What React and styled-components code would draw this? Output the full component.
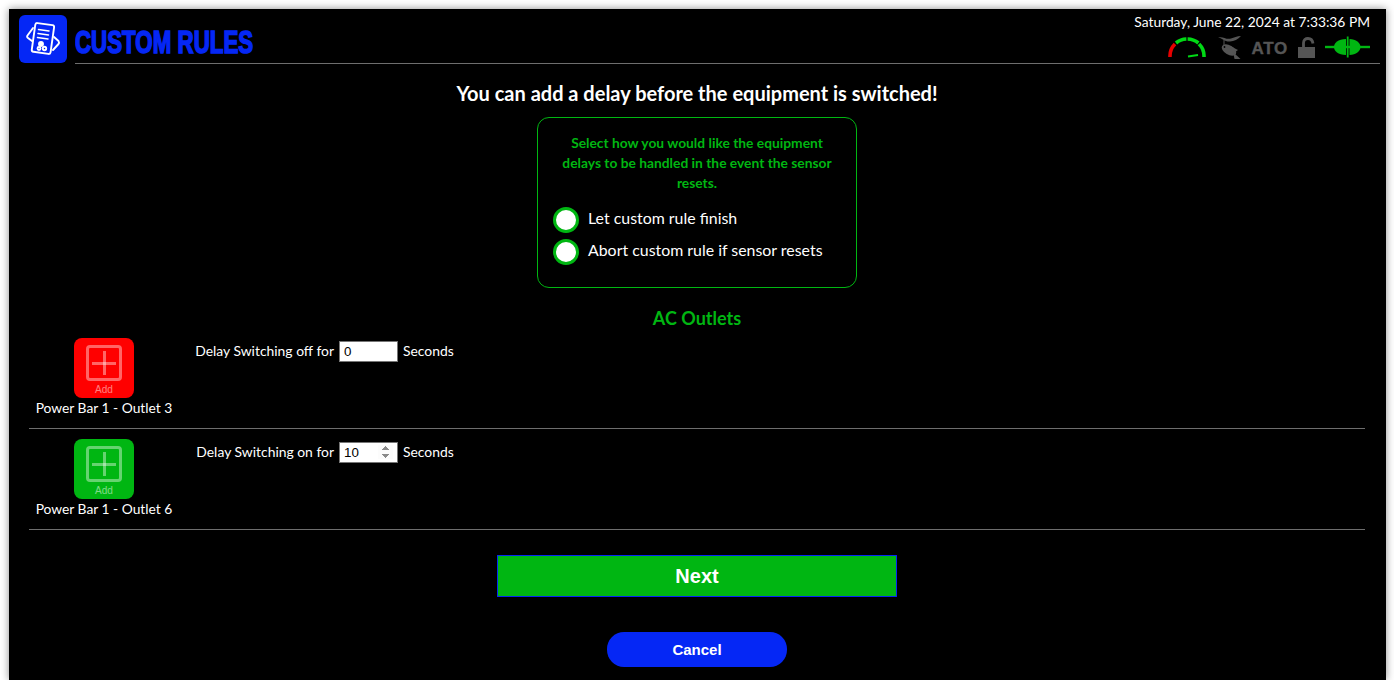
import styled, { createGlobalStyle } from "styled-components";

const GREEN = "#00b612";
const BLUE = "#0527f5";
const GREY = "#555";

const GlobalStyle = createGlobalStyle`
  html, body {
    margin: 0;
    background: #fff;
  }
  body {
    font-family: "Lato", "Liberation Sans", sans-serif;
  }
`;

const Panel = styled.div`
  box-sizing: border-box;
  width: 1377px;
  height: 671px;
  margin: 9px 0 0 9px;
  padding: 6px 6px 0 10px;
  background: #000;
  color: #fff;
  box-shadow: 0 0 8px rgba(0, 0, 0, 0.45);
`;

const Header = styled.header`
  display: flex;
  align-items: stretch;
  gap: 8px;
  height: 49px;
`;

const LogoTile = styled.div`
  width: 48px;
  height: 48px;
  flex: none;
  border-radius: 6px;
  background: ${BLUE};
  display: flex;
  align-items: center;
  justify-content: center;
`;

const TitleBar = styled.div`
  flex: 1;
  display: flex;
  justify-content: space-between;
  border-bottom: 1px solid #6e6e6e;
`;

const Title = styled.h1`
  margin: 11px 0 0;
  font-family: "Liberation Sans", sans-serif;
  font-size: 31px;
  line-height: 34px;
  font-weight: 700;
  color: ${BLUE};
  -webkit-text-stroke: 1.6px ${BLUE};
  transform: scaleX(0.72);
  transform-origin: left center;
  white-space: nowrap;
  height: 34px;
`;

const Status = styled.div`
  display: flex;
  flex-direction: column;
  align-items: flex-end;
  padding-right: 10px;
  margin-top: -2px;
`;

const DateText = styled.div`
  font-size: 13.8px;
  line-height: 17px;
`;

const StatusIcons = styled.div`
  display: flex;
  align-items: center;
  gap: 10px;
  margin-top: 5px;
  height: 24px;
`;

const GaugeSlot = styled.span`
  display: flex;
  margin-right: 2px;
`;

const Ato = styled.span`
  margin: 3px 0 0 1px;
  font-family: "Liberation Sans", sans-serif;
  font-weight: 700;
  font-size: 17px;
  letter-spacing: 0.7px;
  color: ${GREY};
  -webkit-text-stroke: 0.4px ${GREY};
`;

const Main = styled.main`
  display: flex;
  flex-direction: column;
  align-items: center;
  margin-right: 5px;
`;

const Heading = styled.h2`
  margin: 16px 0 0;
  font-size: 20px;
  line-height: 26px;
  font-weight: 700;
`;

const OptionsCard = styled.div`
  box-sizing: border-box;
  width: 320px;
  height: 171px;
  margin-top: 11px;
  padding: 15px 15px 0;
  border: 1px solid ${GREEN};
  border-radius: 12px;
`;

const OptionsText = styled.p`
  margin: 0 0 11px;
  font-size: 13.8px;
  line-height: 20px;
  font-weight: 700;
  text-align: center;
  color: ${GREEN};
`;

const RadioRow = styled.label`
  display: flex;
  align-items: center;
  gap: 9px;
  height: 32px;
  font-size: 15.9px;
`;

const RadioText = styled.span`
  padding-bottom: 5px;
`;

const Radio = styled.input`
  appearance: none;
  box-sizing: border-box;
  width: 26px;
  height: 26px;
  margin: 0;
  border: 3px solid ${GREEN};
  border-radius: 50%;
  background: #fff;
`;

const SectionTitle = styled.h3`
  margin: 20px 0 0;
  font-size: 18px;
  line-height: 20px;
  font-weight: 700;
  color: ${GREEN};
`;

const OutletList = styled.div`
  align-self: stretch;
  margin: 0 10px;
`;

const OutletRow = styled.div`
  display: grid;
  grid-template-columns: 150px 155px auto auto;
  justify-content: start;
  align-items: start;
  height: 101px;
  box-sizing: border-box;
  padding-top: 10px;
  border-bottom: 1px solid #6e6e6e;
  font-size: 13.9px;
`;

const OutletCell = styled.div`
  display: flex;
  flex-direction: column;
  align-items: center;
  gap: 1px;
  white-space: nowrap;
  line-height: 17px;
  font-size: 13.8px;
`;

const AddTile = styled.div`
  width: 60px;
  height: 60px;
  border-radius: 8px;
  background: ${(p) => p.$color};
  display: flex;
  flex-direction: column;
  align-items: center;
  padding-top: 7px;
  box-sizing: border-box;
  color: rgba(255, 255, 255, 0.4);
`;

const AddBox = styled.div`
  position: relative;
  box-sizing: border-box;
  width: 36px;
  height: 36px;
  border: 3px solid currentColor;
  border-radius: 4px;
  &::before,
  &::after {
    content: "";
    position: absolute;
    background: currentColor;
  }
  &::before {
    left: 3px;
    right: 3px;
    top: 13.5px;
    height: 3px;
  }
  &::after {
    top: 3px;
    bottom: 3px;
    left: 13.5px;
    width: 3px;
  }
`;

const AddLabel = styled.span`
  margin-top: 3px;
  font-family: "Liberation Sans", sans-serif;
  font-size: 10px;
  line-height: 11px;
  color: rgba(255, 255, 255, 0.5);
`;

const DelayLabel = styled.label`
  text-align: right;
  line-height: 17px;
  padding-top: 4px;
  white-space: nowrap;
`;

const SecondsInput = styled.input`
  box-sizing: border-box;
  width: 59px;
  height: 21px;
  margin: 3px 5px 0;
  padding: 1px 4px;
  border: 1px solid #767676;
  background: #fff;
  color: #000;
  font-family: "Liberation Sans", sans-serif;
  font-size: 13.33px;
  &::-webkit-inner-spin-button {
    opacity: ${(p) => (p.$spin ? 1 : 0)};
  }
`;

const Unit = styled.span`
  line-height: 17px;
  padding-top: 4px;
`;

const NextButton = styled.button`
  box-sizing: border-box;
  width: 400px;
  height: 42px;
  margin-top: 25px;
  border: 1px solid ${BLUE};
  background: ${GREEN};
  color: #fff;
  font-family: "Liberation Sans", sans-serif;
  font-size: 20px;
  font-weight: 700;
`;

const CancelButton = styled.button`
  box-sizing: border-box;
  width: 180px;
  height: 35px;
  margin-top: 35px;
  border: 0;
  border-radius: 17px;
  background: ${BLUE};
  color: #fff;
  font-family: "Liberation Sans", sans-serif;
  font-size: 15px;
  font-weight: 700;
`;

function LogoIcon() {
  return (
    <svg width="38" height="38" viewBox="0 0 38 38" fill="none" stroke="#fff" strokeWidth="1.9" strokeLinejoin="round" strokeLinecap="round">
      <path d="M9 8 L3.5 15.5 Q2.5 17 4 18 L8 21" />
      <path d="M30 17 L34.5 21 Q35.5 22.5 34.5 24 L29 30" />
      <rect x="9.5" y="4" width="19" height="29" rx="2" transform="rotate(8 19 18)" />
      <path d="M14.5 9.5 L25 11 M14 13.5 L24.5 15 M13.5 17.5 L24 19" strokeWidth="1.5" />
      <circle cx="17" cy="24" r="2" fill="#fff" />
      <circle cx="15" cy="28.5" r="1.5" />
      <circle cx="20.5" cy="28.5" r="1.7" />
    </svg>
  );
}

function GaugeIcon() {
  return (
    <svg width="38" height="22" viewBox="0 0 38 22" fill="none" strokeWidth="3.6">
      <path d="M2 21 A17 17 0 0 1 7 8" stroke="#e80000" />
      <path d="M8 7 A17 17 0 0 1 18.4 3" stroke="#00d915" />
      <path d="M19.6 3 A17 17 0 0 1 30.4 7" stroke="#00d915" />
      <path d="M31 8 A17 17 0 0 1 36 21" stroke="#00d915" />
      <path d="M20 20.5 L30 19" stroke="#00d915" strokeWidth="2" />
    </svg>
  );
}

function FishIcon() {
  return (
    <svg width="23" height="23" viewBox="0 0 23 23" fill={GREY}>
      <path d="M0 1.5 C5 0 8 4 13 2.5 C16 1.5 19 0 23 0 C20 3 16 5.5 12 5.5 C7 6 4 2 0 1.5 Z" />
      <path d="M6 4 L6 9" stroke={GREY} strokeWidth="1" fill="none" />
      <ellipse cx="11" cy="14" rx="8" ry="4.6" transform="rotate(30 11 14)" />
      <path d="M15 16 L22.5 23 L16.5 23 Z" />
      <path d="M12 10 L20 14 L15 17.5 Z" />
      <circle cx="6.5" cy="11" r="0.9" fill="#000" />
    </svg>
  );
}

function LockIcon() {
  return (
    <svg width="17" height="21" viewBox="0 0 17 21" fill="none">
      <path d="M5.5 10 V6 C5.5 3 7.5 1.5 10 1.5 C12.5 1.5 14.5 3 15 6.5" stroke={GREY} strokeWidth="2.8" />
      <rect x="0" y="10" width="17" height="11" fill={GREY} />
    </svg>
  );
}

function PlugIcon() {
  return (
    <svg width="45" height="22" viewBox="0 0 45 22" fill={GREEN}>
      <rect x="0" y="9.8" width="45" height="2.4" />
      <path d="M21 3 C13 3 9 7 9 11 C9 15 13 19 21 19 Z" />
      <path d="M24.5 3 C31 3 35.5 7 35.5 11 C35.5 15 31 19 24.5 19 Z" />
      <rect x="21.8" y="0.5" width="1.8" height="21" />
    </svg>
  );
}

function Outlet({ name, color, label, value, spin }) {
  return (
    <OutletRow>
      <OutletCell>
        <AddTile $color={color}>
          <AddBox />
          <AddLabel>Add</AddLabel>
        </AddTile>
        {name}
      </OutletCell>
      <DelayLabel>{label}</DelayLabel>
      <SecondsInput type="number" defaultValue={value} $spin={spin} />
      <Unit>Seconds</Unit>
    </OutletRow>
  );
}

export default function App() {
  return (
    <>
      <GlobalStyle />
      <Panel>
        <Header>
          <LogoTile>
            <LogoIcon />
          </LogoTile>
          <TitleBar>
            <Title>CUSTOM RULES</Title>
            <Status>
              <DateText>Saturday, June 22, 2024 at 7:33:36 PM</DateText>
              <StatusIcons>
                <GaugeSlot>
                  <GaugeIcon />
                </GaugeSlot>
                <FishIcon />
                <Ato>ATO</Ato>
                <LockIcon />
                <PlugIcon />
              </StatusIcons>
            </Status>
          </TitleBar>
        </Header>
        <Main>
          <Heading>You can add a delay before the equipment is switched!</Heading>
          <OptionsCard>
            <OptionsText>
              Select how you would like the equipment delays to be handled in the event the sensor resets.
            </OptionsText>
            <RadioRow>
              <Radio type="radio" name="reset" />
              <RadioText>Let custom rule finish</RadioText>
            </RadioRow>
            <RadioRow>
              <Radio type="radio" name="reset" />
              <RadioText>Abort custom rule if sensor resets</RadioText>
            </RadioRow>
          </OptionsCard>
          <SectionTitle>AC Outlets</SectionTitle>
          <OutletList>
            <Outlet name="Power Bar 1 - Outlet 3" color="#ff0000" label="Delay Switching off for" value={0} />
            <Outlet name="Power Bar 1 - Outlet 6" color={GREEN} label="Delay Switching on for" value={10} spin />
          </OutletList>
          <NextButton>Next</NextButton>
          <CancelButton>Cancel</CancelButton>
        </Main>
      </Panel>
    </>
  );
}
